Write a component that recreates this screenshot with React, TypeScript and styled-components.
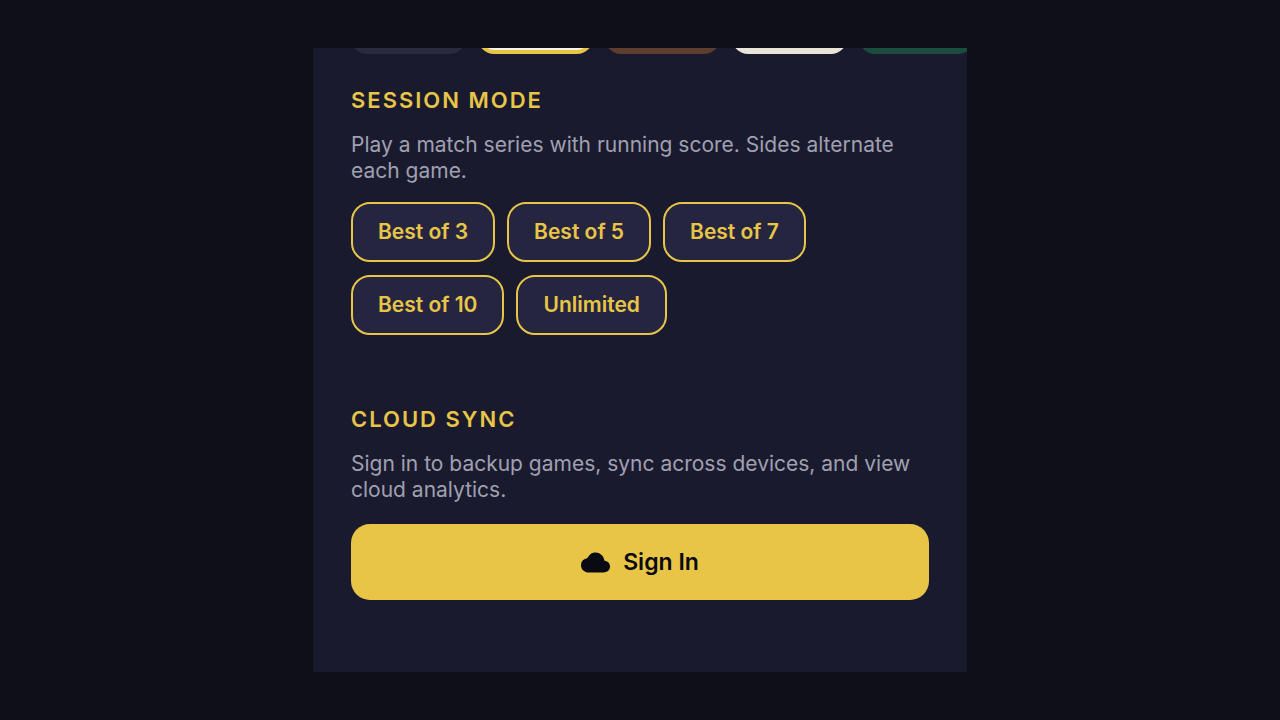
import React from "react";
import styled, { createGlobalStyle } from "styled-components";
import { IoCloud } from "react-icons/io5";

const GlobalStyle = createGlobalStyle`
  *, *::before, *::after { box-sizing: border-box; }
  body {
    margin: 0;
    background: #0f0f17;
    font-family: Inter, "Liberation Sans", sans-serif;
  }
`;

const Page = styled.div`
  display: flex;
  justify-content: center;
  min-height: 100vh;
  padding: 48px 24px;
`;

const Panel = styled.main`
  width: 100%;
  max-width: 654px;
  padding: 0 38px 72px;
  overflow: hidden;
  background: #1a1a2e;
`;

const SwatchRow = styled.div`
  display: flex;
  align-items: flex-end;
  gap: 12px;
  height: 6px;
  margin-right: -38px;
  overflow: hidden;
`;

const Swatch = styled.button<{ $color: string; $selected?: boolean }>`
  flex: none;
  width: 115px;
  height: 76px;
  padding: 0;
  border: ${(p) => (p.$selected ? "4px solid #e8c547" : "0")};
  border-radius: 16px;
  background: ${(p) => p.$color};
  cursor: pointer;
`;

const Section = styled.section`
  padding-top: 32px;

  & + & {
    padding-top: 70px;
  }
`;

const Heading = styled.h2`
  margin: 0 0 18px;
  color: #e8c547;
  font-size: 22px;
  font-weight: 600;
  line-height: 28px;
  letter-spacing: 2px;
  text-transform: uppercase;
`;

const Description = styled.p`
  margin: 0 0 18px;
  color: #a0a0b0;
  font-size: 21px;
  line-height: 26px;
`;

const Options = styled.div`
  display: flex;
  flex-wrap: wrap;
  gap: 13px 12px;
`;

const OptionButton = styled.button`
  height: 60px;
  padding: 0 25px;
  border: 2px solid #e8c547;
  border-radius: 19px;
  background: #252540;
  color: #e8c547;
  font: 600 21px/26px Inter, "Liberation Sans", sans-serif;
  cursor: pointer;
`;

const SignInButton = styled.button`
  display: flex;
  align-items: center;
  justify-content: center;
  gap: 13px;
  width: 100%;
  height: 76px;
  margin-top: 21px;
  border: 0;
  border-radius: 19px;
  background: #e8c547;
  color: #0a0a12;
  font: 600 23px/28px Inter, "Liberation Sans", sans-serif;
  cursor: pointer;
`;

const themes = [
  { name: "Slate", color: "#2a2a3e" },
  { name: "Classic", color: "#f8f4e8", selected: true },
  { name: "Walnut", color: "#5c3d2e" },
  { name: "Ivory", color: "#e8e4d9" },
  { name: "Emerald", color: "#1b4d3e" },
];

const modes = ["Best of 3", "Best of 5", "Best of 7", "Best of 10", "Unlimited"];

export default function App() {
  return (
    <>
      <GlobalStyle />
      <Page>
        <Panel>
          <SwatchRow>
            {themes.map((t) => (
              <Swatch
                key={t.name}
                type="button"
                aria-label={t.name}
                aria-pressed={!!t.selected}
                $color={t.color}
                $selected={t.selected}
              />
            ))}
          </SwatchRow>
          <Section>
            <Heading>Session Mode</Heading>
            <Description>
              Play a match series with running score. Sides alternate each game.
            </Description>
            <Options>
              {modes.map((m) => (
                <OptionButton key={m} type="button">{m}</OptionButton>
              ))}
            </Options>
          </Section>
          <Section>
            <Heading>Cloud Sync</Heading>
            <Description>
              Sign in to backup games, sync across devices, and view cloud analytics.
            </Description>
            <SignInButton type="button">
              <IoCloud size={29} aria-hidden="true" />
              Sign In
            </SignInButton>
          </Section>
        </Panel>
      </Page>
    </>
  );
}
